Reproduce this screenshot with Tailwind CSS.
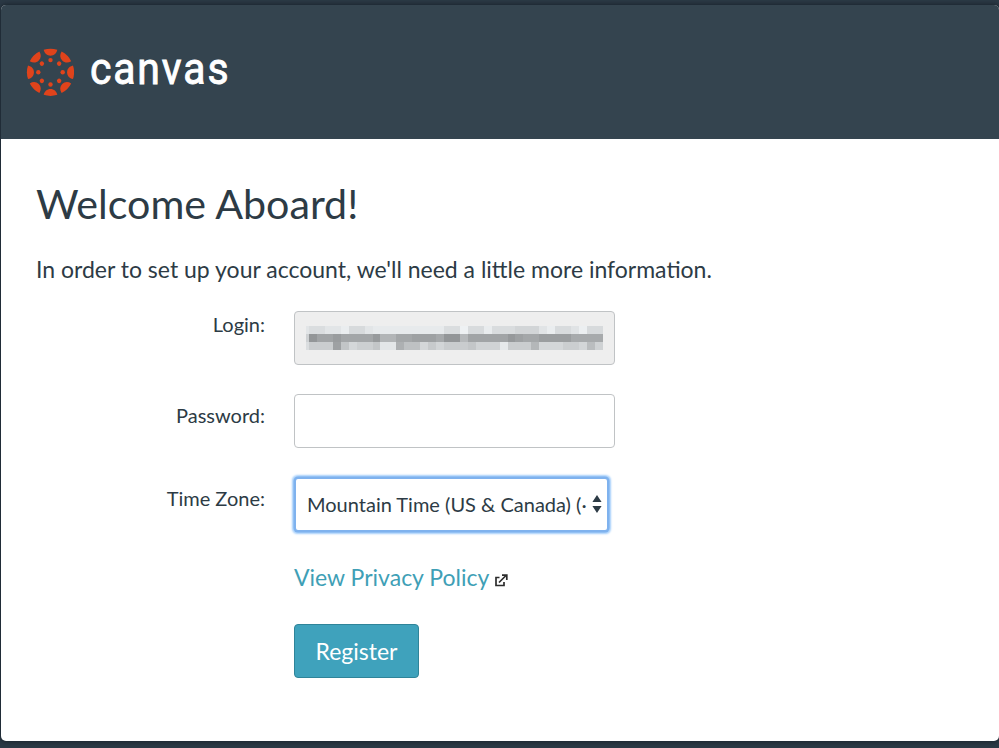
<!DOCTYPE html>
<html lang="en">
<head>
<meta charset="utf-8">
<title>Canvas registration</title>
<script src="https://cdn.jsdelivr.net/npm/@tailwindcss/browser@4"></script>
</head>
<body class="h-[748px] overflow-hidden bg-[#2b3945] pt-[5px] pl-px font-[Lato,sans-serif] text-[#2d3b45]">
<main class="h-[736px] w-[998px] overflow-hidden rounded-[5px] bg-white shadow-[0_0_4px_1px_#1b252e]">
  <header class="flex h-[134px] items-center bg-[#34444f] pl-[25px]">
    <svg class="h-12 w-12" viewBox="-24.5 -24.3 48 48" fill="#e0431b" aria-hidden="true">
      <defs>
        <g id="seg"><path d="M-6.8-22.5Q0-24.7 6.8-22.5C6-18.8 3.5-16.6 0-16.6S-6-18.8-6.8-22.5Z"/><circle cy="-12.2" r="2.2"/></g>
      </defs>
      <use href="#seg"/><use href="#seg" transform="rotate(45)"/><use href="#seg" transform="rotate(90)"/><use href="#seg" transform="rotate(135)"/><use href="#seg" transform="rotate(180)"/><use href="#seg" transform="rotate(225)"/><use href="#seg" transform="rotate(270)"/><use href="#seg" transform="rotate(315)"/>
    </svg>
    <svg class="ml-[15px] h-16 w-40 overflow-visible" viewBox="0 0 160 64"><text x="1" y="44" transform="scale(.93 1)" textLength="149" font-family="Roboto" font-size="44" fill="#fff" stroke="#fff" stroke-width=".9">canvas</text></svg>
  </header>
  <section class="pt-[38px] pl-[35px]">
    <h1 class="text-[41.2px] leading-[52px]">Welcome Aboard!</h1>
    <p class="mt-[26px] text-[23px] leading-[28px]">In order to set up your account, we'll need a little more information.</p>
    <form class="mt-[28px] grid w-[580px] grid-cols-[229px_321px] gap-x-[29px] text-[20px]">
      <label class="h-[83px] pt-[1px] text-right leading-6">Login:</label>
      <div class="h-[54px] rounded-[4px] border border-[#c0c3c5] bg-[#eeeeee] pt-[14px] pl-[11px]">
        <svg id="mosaic" class="h-[24px] w-[297px]" viewBox="0 0 297 24" shape-rendering="crispEdges"></svg>
      </div>
      <label class="h-[83px] pt-[9px] text-right leading-6">Password:</label>
      <div class="h-[54px] rounded-[4px] border border-[#c0c3c5] bg-white"></div>
      <label class="h-[83px] pt-[9px] text-right leading-6">Time Zone:</label>
      <div class="mt-[2px] ml-[2px] flex h-[51px] w-[311px] items-center rounded-[2px] bg-white pb-[2px] pl-[11px] shadow-[0_0_0_2.5px_#7fb2ee,0_0_2px_4px_#a5cffb]">
        <span class="w-[281px] overflow-hidden whitespace-nowrap">Mountain Time (US &amp; Canada) (·</span>
        <svg class="ml-[4px] h-5 w-2.5" viewBox="0 0 10 20" fill="#2d3b45"><path d="M5 1l4.6 7H.4zM5 19l4.6-7H.4z"/></svg>
      </div>
    </form>
    <div class="mt-[3px] ml-[258px] flex items-center text-[23px] leading-7 text-[#3f9fb6]">
      <a>View Privacy Policy</a>
      <svg class="mt-[6px] ml-[6px] h-[13px] w-[13px]" viewBox="0 0 13 13" fill="none" stroke="#2d2d2d" stroke-width="1.7"><path d="M4.5 3.5H1v8h8V8M4 8.5l7-7M7 1.2h4.8V6"/></svg>
    </div>
    <button class="mt-[33px] ml-[258px] h-[54px] w-[125px] rounded-[4px] border border-[#2f8499] bg-[#3fa2bc] text-[23px] text-white">Register</button>
  </section>
</main>
<script>
  // Obscured login value: each row is a list of [grey level, number of cells].
  const rows = [
    [[220,2],[228,2],[236,1],[217,2],[228,1],[233,9],[220,2],[240,1],[218,2],[235,1],[219,3],[212,3],[227,1],[236,1],[218,2],[226,1],[238,1],[217,2]],
    [[149,1],[163,2],[155,1],[165,4],[153,1],[180,2],[166,2],[160,3],[168,1],[149,2],[184,1],[163,5],[152,1],[160,1],[166,2],[157,4],[169,4]],
    [[204,3],[160,1],[196,1],[214,1],[206,2],[197,1],[229,2],[175,1],[192,2],[214,1],[201,1],[212,1],[203,3],[197,1],[210,3],[232,1],[204,3],[182,1],[214,3],[205,2],[213,1],[188,1],[209,2]]
  ];
  const ns = "http://www.w3.org/2000/svg", svg = document.getElementById("mosaic"), cell = 7.94;
  const add = (x, y, w, v) => {
    const r = document.createElementNS(ns, "rect");
    r.setAttribute("x", x); r.setAttribute("y", y);
    r.setAttribute("width", w); r.setAttribute("height", 8);
    r.setAttribute("fill", `rgb(${v - 2},${v + 1},${v + 3})`);
    svg.append(r);
  };
  rows.forEach((row, i) => {
    let x = 3;
    add(0, i * 8, 3, [228, 208, 220][i]);
    for (const [v, n] of row) { add(x, i * 8, n * cell, v); x += n * cell; }
  });
</script>
</body>
</html>
